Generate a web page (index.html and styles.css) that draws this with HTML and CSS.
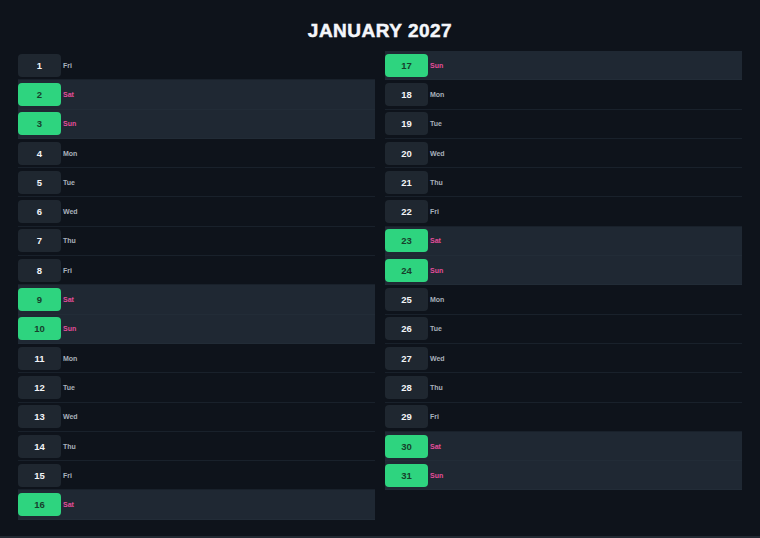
FILE: index.html
```html
<!doctype html>
<html lang="en">
  <head>
    <meta charset="UTF-8" />
    <meta name="viewport" content="width=device-width, initial-scale=1.0" />
    <title>January 2027</title>
    <link rel="stylesheet" href="styles.css">
  </head>
  <body>
    <div class="page">
      <h1>JANUARY 2027</h1>

      <div class="columns">
        <div class="column">
          <div class="day"><span class="num">1</span><span class="name">Fri</span></div>
          <div class="day weekend"><span class="num">2</span><span class="name">Sat</span></div>
          <div class="day weekend"><span class="num">3</span><span class="name">Sun</span></div>
          <div class="day"><span class="num">4</span><span class="name">Mon</span></div>
          <div class="day"><span class="num">5</span><span class="name">Tue</span></div>
          <div class="day"><span class="num">6</span><span class="name">Wed</span></div>
          <div class="day"><span class="num">7</span><span class="name">Thu</span></div>
          <div class="day"><span class="num">8</span><span class="name">Fri</span></div>
          <div class="day weekend"><span class="num">9</span><span class="name">Sat</span></div>
          <div class="day weekend"><span class="num">10</span><span class="name">Sun</span></div>
          <div class="day"><span class="num">11</span><span class="name">Mon</span></div>
          <div class="day"><span class="num">12</span><span class="name">Tue</span></div>
          <div class="day"><span class="num">13</span><span class="name">Wed</span></div>
          <div class="day"><span class="num">14</span><span class="name">Thu</span></div>
          <div class="day"><span class="num">15</span><span class="name">Fri</span></div>
          <div class="day weekend"><span class="num">16</span><span class="name">Sat</span></div>
        </div>

        <div class="column">
          <div class="day weekend"><span class="num">17</span><span class="name">Sun</span></div>
          <div class="day"><span class="num">18</span><span class="name">Mon</span></div>
          <div class="day"><span class="num">19</span><span class="name">Tue</span></div>
          <div class="day"><span class="num">20</span><span class="name">Wed</span></div>
          <div class="day"><span class="num">21</span><span class="name">Thu</span></div>
          <div class="day"><span class="num">22</span><span class="name">Fri</span></div>
          <div class="day weekend"><span class="num">23</span><span class="name">Sat</span></div>
          <div class="day weekend"><span class="num">24</span><span class="name">Sun</span></div>
          <div class="day"><span class="num">25</span><span class="name">Mon</span></div>
          <div class="day"><span class="num">26</span><span class="name">Tue</span></div>
          <div class="day"><span class="num">27</span><span class="name">Wed</span></div>
          <div class="day"><span class="num">28</span><span class="name">Thu</span></div>
          <div class="day"><span class="num">29</span><span class="name">Fri</span></div>
          <div class="day weekend"><span class="num">30</span><span class="name">Sat</span></div>
          <div class="day weekend"><span class="num">31</span><span class="name">Sun</span></div>
        </div>
      </div>
    </div>
  </body>
</html>
```

FILE: styles.css
```css
body {
  margin: 0;
  padding: 0;
  font-family: 'Liberation Sans', Arial, sans-serif;
  background: #0e131b;
  color: #fff;
}

.page {
  height: 538px;
  box-sizing: border-box;
  padding: 20px 18px 0;
  border-bottom: 2px solid #222a33;
}

h1 {
  margin: 0 0 9px 0;
  font-size: 19px;
  line-height: 22px;
  letter-spacing: 0.5px;
  text-align: center;
  color: #f4f6fa;
  font-weight: bold;
  -webkit-text-stroke: 0.5px #f4f6fa;
}

.columns {
  display: grid;
  grid-template-columns: 1fr 1fr;
  gap: 10px;
  align-items: start;
}

.day {
  display: flex;
  align-items: center;
  gap: 2px;
  height: 29.3px;
  box-sizing: border-box;
  border-bottom: 1px solid #19212b;
}

.day.weekend {
  background: #1f2833;
  border-bottom-color: #222c37;
}

.num {
  width: 43px;
  height: 23px;
  border-radius: 4px;
  background: #1f2730;
  display: flex;
  align-items: center;
  justify-content: center;
  font-size: 9.5px;
  font-weight: bold;
  color: #f2f4f7;
}

.weekend .num {
  background: #2ed47f;
  color: #17402c;
}

.name {
  font-size: 7px;
  font-weight: bold;
  color: #a9b1bb;
}

.weekend .name {
  color: #e44d9a;
}
```
